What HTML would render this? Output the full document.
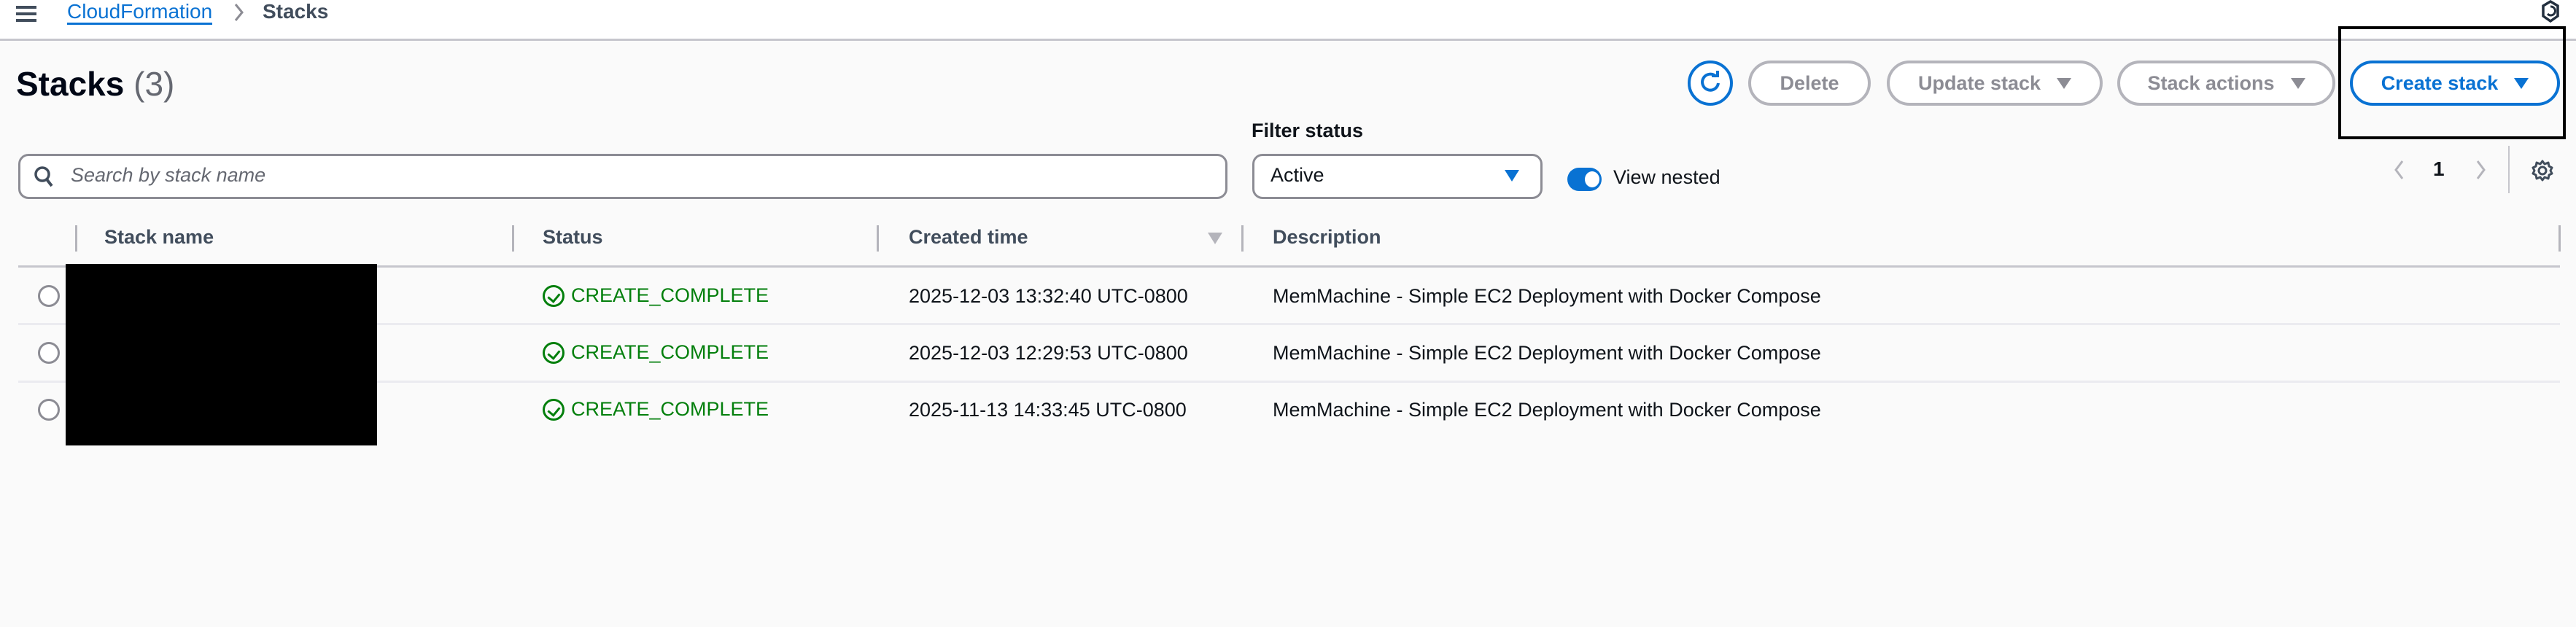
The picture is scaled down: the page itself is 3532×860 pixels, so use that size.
<!DOCTYPE html>
<html><head><meta charset="utf-8"><style>
*{box-sizing:border-box;margin:0;padding:0}
body{width:3532px;height:860px;background:#fafafa;font-family:"Liberation Sans",sans-serif;color:#0f141a;position:relative;overflow:hidden;font-size:28px}
.a{position:absolute;white-space:nowrap}
.hdr{position:absolute;left:0;top:0;width:3532px;height:56px;background:#fff;border-bottom:3px solid #c6c6cd}
.btn{position:absolute;top:83px;height:62px;border:4px solid #b4b4bb;border-radius:31px;background:#fff;color:#8c8c94;font-weight:bold;font-size:27px;display:flex;align-items:center;justify-content:center;gap:22px}
.tri{width:0;height:0;border-left:10px solid transparent;border-right:10px solid transparent;border-top:15px solid currentColor}
.vd{position:absolute;width:3px;height:36px;top:309px;background:#b4b4bb}
.th{position:absolute;top:310px;font-weight:bold;font-size:27px;color:#414d5c}
.row{position:absolute;left:25px;width:3485px;height:3px;background:#ebebf0}
.radio{position:absolute;left:52px;width:30px;height:30px;border:3px solid #8c8c94;border-radius:50%;background:#fff}
.st{position:absolute;left:744px;color:#037f0c;font-size:27px;display:flex;align-items:center;gap:9px}
.ck{width:30px;height:30px;border:3.5px solid #037f0c;border-radius:50%;position:relative}
.ck:after{content:"";position:absolute;left:7px;top:5px;width:8px;height:12px;border-right:3.5px solid #037f0c;border-bottom:3.5px solid #037f0c;transform:rotate(40deg)}
.dt{position:absolute;left:1246px;font-size:27px}
.ds{position:absolute;left:1745px;font-size:27px}
</style></head><body>
<div class="hdr"></div>
<div class="a" style="left:22px;top:8px;width:28px;height:4px;background:#414d5c"></div>
<div class="a" style="left:22px;top:17px;width:28px;height:4px;background:#414d5c"></div>
<div class="a" style="left:22px;top:26px;width:28px;height:4px;background:#414d5c"></div>
<div class="a" style="left:92px;top:0px;font-size:28px;color:#0972d3;border-bottom:3px solid #0972d3;line-height:31px">CloudFormation</div>
<svg class="a" style="left:320px;top:4px" width="16" height="26"><path d="M3 2 L12 13 L3 24" stroke="#8c8c94" stroke-width="3" fill="none"/></svg>
<div class="a" style="left:360px;top:0px;font-size:28px;font-weight:bold;color:#414d5c;line-height:31px">Stacks</div>
<svg class="a" style="left:3484px;top:0" width="26" height="32"><path d="M13 2 L23 8 L23 22 L13 29 L3 22 L3 8 Z" stroke="#232f3e" stroke-width="3.5" fill="none"/><path d="M13 9 A6 6 0 1 1 9 19" stroke="#232f3e" stroke-width="3" fill="none"/></svg>

<div class="a" style="left:22px;top:88px;font-size:46px;font-weight:bold;color:#000716">Stacks <span style="font-weight:normal;color:#656871">(3)</span></div>

<div class="a" style="left:2314px;top:83px;width:62px;height:62px;border:4px solid #0972d3;border-radius:50%;background:#fff"></div>
<svg class="a" style="left:2326px;top:95px" width="38" height="38"><path d="M27 10 A11 11 0 1 0 30 19" stroke="#0972d3" stroke-width="4" fill="none"/><path d="M21 9 L29 9 L29 2" stroke="#0972d3" stroke-width="4" fill="none"/></svg>
<div class="btn" style="left:2397px;width:168px">Delete</div>
<div class="btn" style="left:2587px;width:296px">Update stack<span class="tri"></span></div>
<div class="btn" style="left:2903px;width:299px">Stack actions<span class="tri"></span></div>
<div class="btn" style="left:3222px;width:288px;border-color:#0972d3;color:#0972d3">Create stack<span class="tri"></span></div>
<div class="a" style="left:3206px;top:36px;width:312px;height:155px;border:4px solid #000"></div>

<div class="a" style="left:1716px;top:164px;font-size:27px;font-weight:bold;color:#0f141a">Filter status</div>
<div class="a" style="left:25px;top:211px;width:1658px;height:62px;border:3px solid #8c8c94;border-radius:14px;background:#fff"></div>
<svg class="a" style="left:45px;top:226px" width="30" height="34"><circle cx="13" cy="13" r="9" stroke="#414d5c" stroke-width="3.5" fill="none"/><path d="M19 20 L26 29" stroke="#414d5c" stroke-width="4"/></svg>
<div class="a" style="left:97px;top:225px;font-size:27px;font-style:italic;color:#656871">Search by stack name</div>
<div class="a" style="left:1717px;top:211px;width:398px;height:62px;border:3px solid #8c8c94;border-radius:14px;background:#fff"></div>
<div class="a" style="left:1742px;top:225px;font-size:27px">Active</div>
<div class="a" style="left:2063px;top:233px;width:0;height:0;border-left:10px solid transparent;border-right:10px solid transparent;border-top:16px solid #0972d3"></div>
<div class="a" style="left:2149px;top:230px;width:47px;height:32px;border-radius:16px;background:#0972d3"></div>
<div class="a" style="left:2173px;top:235px;width:20px;height:22px;border-radius:50%;background:#fff"></div>
<div class="a" style="left:2212px;top:228px;font-size:27px">View nested</div>

<svg class="a" style="left:3280px;top:218px" width="20" height="30"><path d="M14 3 L5 15 L14 27" stroke="#b4b4bb" stroke-width="3" fill="none"/></svg>
<div class="a" style="left:3336px;top:216px;font-size:28px;font-weight:bold">1</div>
<svg class="a" style="left:3392px;top:218px" width="20" height="30"><path d="M5 3 L14 15 L5 27" stroke="#b4b4bb" stroke-width="3" fill="none"/></svg>
<div class="a" style="left:3439px;top:200px;width:2px;height:65px;background:#c6c6cd"></div>
<svg class="a" style="left:3470px;top:218px" width="32" height="32"><circle cx="16" cy="16" r="5" stroke="#414d5c" stroke-width="3" fill="none"/><path d="M16 3 L19 7 L24 5 L25 10 L29 12 L27 16 L29 20 L25 22 L24 27 L19 25 L16 29 L13 25 L8 27 L7 22 L3 20 L5 16 L3 12 L7 10 L8 5 L13 7 Z" stroke="#414d5c" stroke-width="3" fill="none" stroke-linejoin="round"/></svg>

<div class="vd" style="left:103px"></div>
<div class="vd" style="left:702px"></div>
<div class="vd" style="left:1202px"></div>
<div class="vd" style="left:1702px"></div>
<div class="vd" style="left:3508px"></div>
<div class="th" style="left:143px">Stack name</div>
<div class="th" style="left:744px">Status</div>
<div class="th" style="left:1246px">Created time</div>
<div class="a" style="left:1656px;top:319px;width:0;height:0;border-left:10px solid transparent;border-right:10px solid transparent;border-top:16px solid #b4b4bb"></div>
<div class="th" style="left:1745px">Description</div>
<div class="row" style="top:364px;background:#c6c6cd"></div>
<div class="row" style="top:443px"></div>
<div class="row" style="top:522px"></div>

<div class="radio" style="top:391px"></div>
<div class="radio" style="top:469px"></div>
<div class="radio" style="top:547px"></div>
<div class="st" style="top:390px"><span class="ck"></span>CREATE_COMPLETE</div>
<div class="st" style="top:468px"><span class="ck"></span>CREATE_COMPLETE</div>
<div class="st" style="top:546px"><span class="ck"></span>CREATE_COMPLETE</div>
<div class="dt" style="top:391px">2025-12-03 13:32:40 UTC-0800</div>
<div class="dt" style="top:469px">2025-12-03 12:29:53 UTC-0800</div>
<div class="dt" style="top:547px">2025-11-13 14:33:45 UTC-0800</div>
<div class="ds" style="top:391px">MemMachine - Simple EC2 Deployment with Docker Compose</div>
<div class="ds" style="top:469px">MemMachine - Simple EC2 Deployment with Docker Compose</div>
<div class="ds" style="top:547px">MemMachine - Simple EC2 Deployment with Docker Compose</div>
<div class="a" style="left:90px;top:362px;width:427px;height:249px;background:#000"></div>
</body></html>
